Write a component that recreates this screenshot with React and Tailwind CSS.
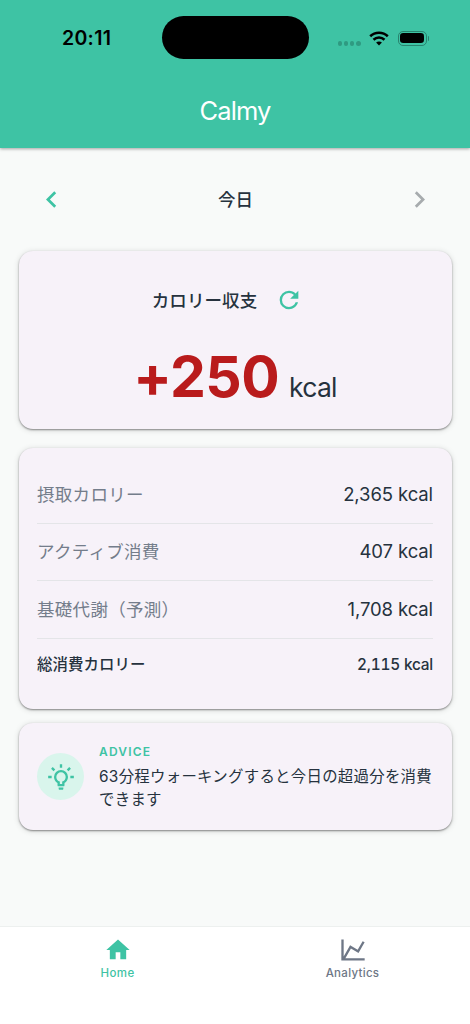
const HOME = "M10,20V14H14V20H19V12H22L12,3L2,12H5V20H10Z";
const CHART = "M16,11.78L20.24,4.45L21.97,5.45L16.74,14.5L10.23,10.75L5.46,19H22V21H2V3H4V17.54L9.5,8L16,11.78Z";
const REFRESH =
  "M17.65,6.35C16.2,4.9 14.21,4 12,4A8,8 0 0,0 4,12A8,8 0 0,0 12,20C15.73,20 18.84,17.45 19.73,14H17.65C16.83,16.33 14.61,18 12,18A6,6 0 0,1 6,12A6,6 0 0,1 12,6C13.66,6 15.14,6.69 16.22,7.78L13,11H20V4L17.65,6.35Z";
const LEFT = "M15.41,16.58L10.83,12L15.41,7.41L14,6L8,12L14,18L15.41,16.58Z";
const RIGHT = "M8.59,16.58L13.17,12L8.59,7.41L10,6L16,12L10,18L8.59,16.58Z";
const BULB =
  "M20,11H23V13H20V11M1,11H4V13H1V11M13,1V4H11V1H13M4.92,3.5L7.05,5.64L5.63,7.05L3.5,4.93L4.92,3.5M16.95,5.63L19.07,3.5L20.5,4.93L18.37,7.05L16.95,5.63M12,6A6,6 0 0,1 18,12C18,14.22 16.79,16.16 15,17.2V19A1,1 0 0,1 14,20H10A1,1 0 0,1 9,19V17.2C7.21,16.16 6,14.22 6,12A6,6 0 0,1 12,6M14,21V22A1,1 0 0,1 13,23H11A1,1 0 0,1 10,22V21H14M11,18H13V15.87C14.73,15.43 16,13.86 16,12A4,4 0 0,0 12,8A4,4 0 0,0 8,12C8,13.86 9.27,15.43 11,15.87V18Z";

const Icon = ({ d, className }) => (
  <svg viewBox="0 0 24 24" fill="currentColor" className={className}>
    <path d={d} />
  </svg>
);

const Card = ({ className, children }) => (
  <div
    className={`rounded-[14px] bg-[#f7f2f9] shadow-[0_1px_2px_rgba(0,0,0,0.42),0_1px_6px_rgba(0,0,0,0.14)] ${className}`}
  >
    {children}
  </div>
);

const rows = [
  { label: "摂取カロリー", value: "2,365 kcal" },
  { label: "アクティブ消費", value: "407 kcal" },
  { label: "基礎代謝（予測）", value: "1,708 kcal" },
];

const StatusBar = () => (
  <div className="flex h-[75px] items-center">
    <div className="w-[162px] pt-[3px] pl-[62px] text-[19.5px] font-semibold tracking-[0.3px] text-black">
      20:11
    </div>
    <div className="h-[43px] w-[147px] rounded-full bg-black" />
    <div className="ml-[28.5px] mt-[12px] flex gap-[2px]">
      {[0, 1, 2, 3].map((i) => (
        <span key={i} className="size-[4.3px] rounded-full bg-[#2f9a81]" />
      ))}
    </div>
    <svg viewBox="0 0 20 15" className="mt-px ml-2 h-[15px] w-5" fill="none" stroke="#000" strokeWidth="2.6">
      <path d="M1.2 5.2C6.1 .6 13.9 .6 18.8 5.2" />
      <path d="M4.5 8.7C7.6 5.8 12.4 5.8 15.5 8.7" />
      <path d="M7.1 11.5C8.7 10 11.3 10 12.9 11.5L10 14.5Z" fill="#000" stroke="none" />
    </svg>
    <div className="mt-px ml-[9px] flex items-center gap-px">
      <div className="h-[15px] w-[29px] rounded-[5px] border border-[#28836e] p-[1.5px]">
        <div className="h-full w-full rounded-[3.2px] bg-black" />
      </div>
      <div className="h-[5px] w-[1.5px] rounded-r bg-[#28836e]" />
    </div>
  </div>
);

export default function App() {
  return (
    <div className="flex h-[1024px] w-[470px] flex-col overflow-hidden bg-[#f8faf9] font-['Inter','Noto_Sans_CJK_JP',sans-serif] text-[#26323e]">
      <header className="h-[148px] shrink-0 bg-[#3ec3a4] shadow-[0_1px_3px_rgba(0,0,0,0.35)]">
        <StatusBar />
        <h1 className="mt-[18px] text-center text-[25.5px] leading-9 tracking-[-0.9px] text-white">Calmy</h1>
      </header>

      <main className="flex flex-1 flex-col px-[19px] pr-[18px]">
        <div className="flex h-[103px] items-center justify-between px-4">
          <Icon d={LEFT} className="size-[33px] text-[#3ec3a4]" />
          <span className="pt-0.5 text-[17.5px] font-medium">今日</span>
          <Icon d={RIGHT} className="size-[33px] text-[#a7abae]" />
        </div>

        <Card className="flex h-[178px] flex-col items-center">
          <div className="mt-[35px] flex h-7 items-center gap-[18px] pr-[16px]">
            <span className="pt-0.5 text-[17.5px] font-medium tracking-[0.1px]">カロリー収支</span>
            <Icon d={REFRESH} className="size-7 text-[#3ec3a4]" />
          </div>
          <div className="mt-[30px] flex items-baseline gap-[10px] pr-px">
            <span className="text-[57px] leading-[66px] font-bold tracking-[-0.6px] text-[#b91b1c]">+250</span>
            <span className="text-[26.5px] tracking-[-0.7px]">kcal</span>
          </div>
        </Card>

        <Card className="mt-[19px] h-[261px] pt-[18px] pr-[19px] pl-[18px]">
          {rows.map((row) => (
            <div
              key={row.label}
              className="flex h-[57.5px] items-center justify-between border-b border-[#e4e5e8] pt-px text-[17.5px]"
            >
              <span className="tracking-[0.3px] text-[#747d8b]">{row.label}</span>
              <span className="text-[18.5px] tracking-[-0.1px]">{row.value}</span>
            </div>
          ))}
          <div className="flex h-[52px] items-center justify-between text-[15.4px] font-medium">
            <span className="tracking-[0.1px]">総消費カロリー</span>
            <span className="tracking-[-0.2px] tabular-nums">2,115 kcal</span>
          </div>
        </Card>

        <Card className="mt-[14px] flex h-[107px] items-center px-[18px]">
          <div className="flex size-[47px] shrink-0 items-center justify-center rounded-full bg-[#d9f5ec]">
            <Icon d={BULB} className="size-7 text-[#3ec3a4]" />
          </div>
          <div className="ml-[15px] pt-[2px]">
            <div className="text-[12px] leading-[15px] font-semibold tracking-[1.2px] text-[#3ec3a4]">ADVICE</div>
            <p className="mt-[6px] text-[15.4px] leading-[23.4px] tracking-[0.3px] whitespace-nowrap">
              63分程ウォーキングすると今日の超過分を消費
              <br />
              できます
            </p>
          </div>
        </Card>
      </main>

      <nav className="flex h-[98px] shrink-0 border-t border-[#edf0ef] bg-white text-[11.5px] font-medium">
        <div className="flex flex-1 flex-col items-center pt-[9px] text-[#3ec3a4]">
          <Icon d={HOME} className="size-7" />
          <span className="mt-[1px] tracking-[0.4px]">Home</span>
        </div>
        <div className="flex flex-1 flex-col items-center pt-[9px] text-[#6e7786]">
          <Icon d={CHART} className="size-7" />
          <span className="mt-[1px] tracking-[0.3px]">Analytics</span>
        </div>
      </nav>
    </div>
  );
}
